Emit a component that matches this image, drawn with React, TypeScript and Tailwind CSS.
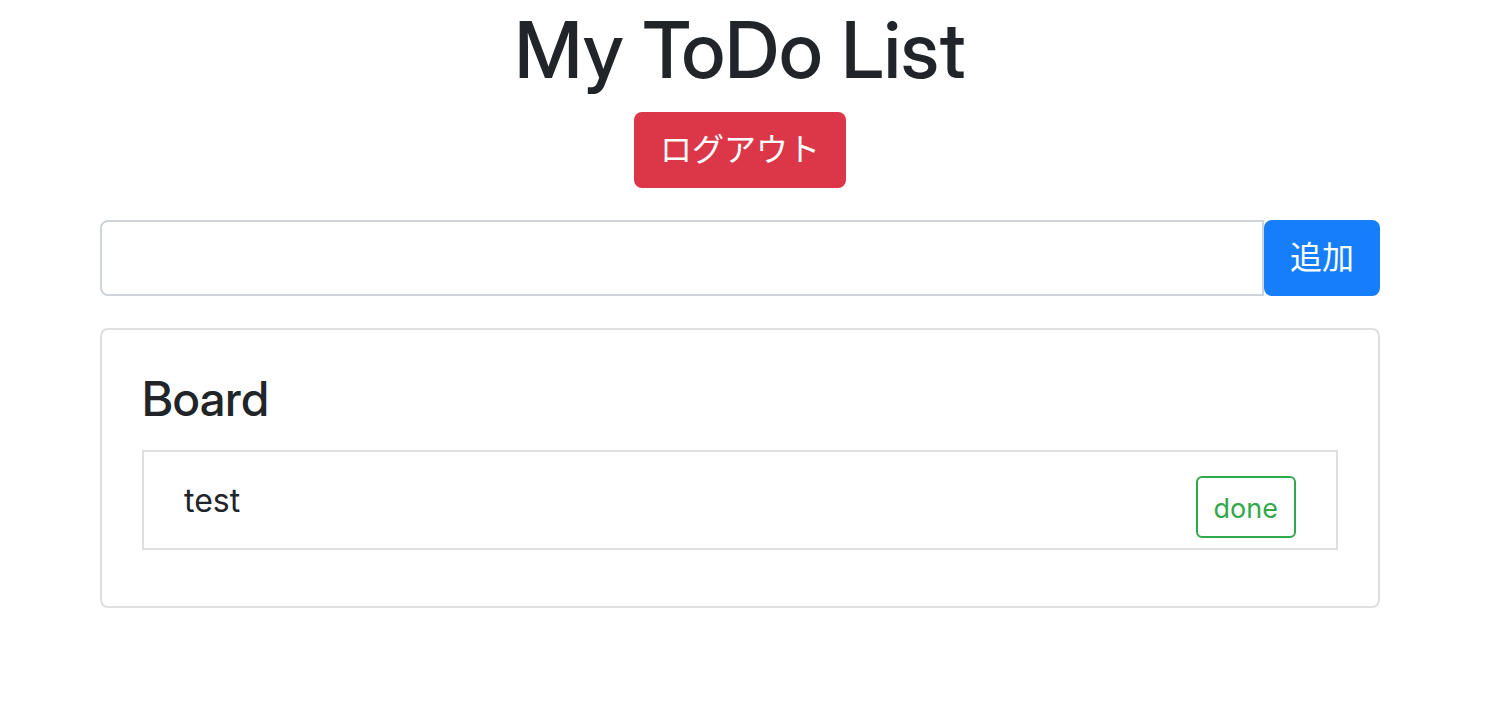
import { useState, type FormEvent } from "react";

export default function App() {
  const [todos, setTodos] = useState<string[]>(["test"]);
  const [text, setText] = useState("");

  const add = (e: FormEvent) => {
    e.preventDefault();
    if (!text.trim()) return;
    setTodos([...todos, text.trim()]);
    setText("");
  };

  return (
    <div className="bg-white pr-6 font-['Inter','Noto_Sans_CJK_JP',sans-serif] text-[#212529]">
      <div className="mx-auto max-w-[1280px]">
        <header className="flex flex-col items-center">
          <h1 className="pb-3 font-['Inter_Display','Inter',sans-serif] text-[78px] leading-[100px] font-medium">My ToDo List</h1>
          <button type="button" className="h-[76px] rounded-lg bg-[#db3748] px-[26px] text-[32px] leading-12 text-white">
            ログアウト
          </button>
        </header>
        <form onSubmit={add} className="mt-8 flex">
          <input
            type="text"
            aria-label="ToDo"
            value={text}
            onChange={(e) => setText(e.target.value)}
            className="h-[76px] min-w-0 flex-1 rounded-l-lg border-2 border-[#ced4da] px-6 text-[32px] outline-none"
          />
          <button type="submit" className="h-[76px] rounded-lg bg-[#167efb] px-[26px] text-[32px] leading-12 text-white">
            追加
          </button>
        </form>
        <main className="mt-8 rounded-lg border-2 border-[#dfdfdf] px-10 pt-10 pb-14">
          <h2 className="mb-[22px] font-['Inter_Display','Inter',sans-serif] text-[48px] leading-[58px] font-medium">Board</h2>
          <ul>
            {todos.map((todo, i) => (
              <li key={i} className="flex h-[100px] items-start justify-between border-2 border-[#dfdfdf] px-10 pt-6">
                <span className="text-[32px] leading-[50px]">{todo}</span>
                <button
                  type="button"
                  onClick={() => setTodos(todos.filter((_, j) => j !== i))}
                  className="h-[62px] rounded-md border-2 border-[#31a84c] px-4 pt-1 text-[27px] text-[#31a84c]"
                >
                  done
                </button>
              </li>
            ))}
          </ul>
        </main>
      </div>
    </div>
  );
}
